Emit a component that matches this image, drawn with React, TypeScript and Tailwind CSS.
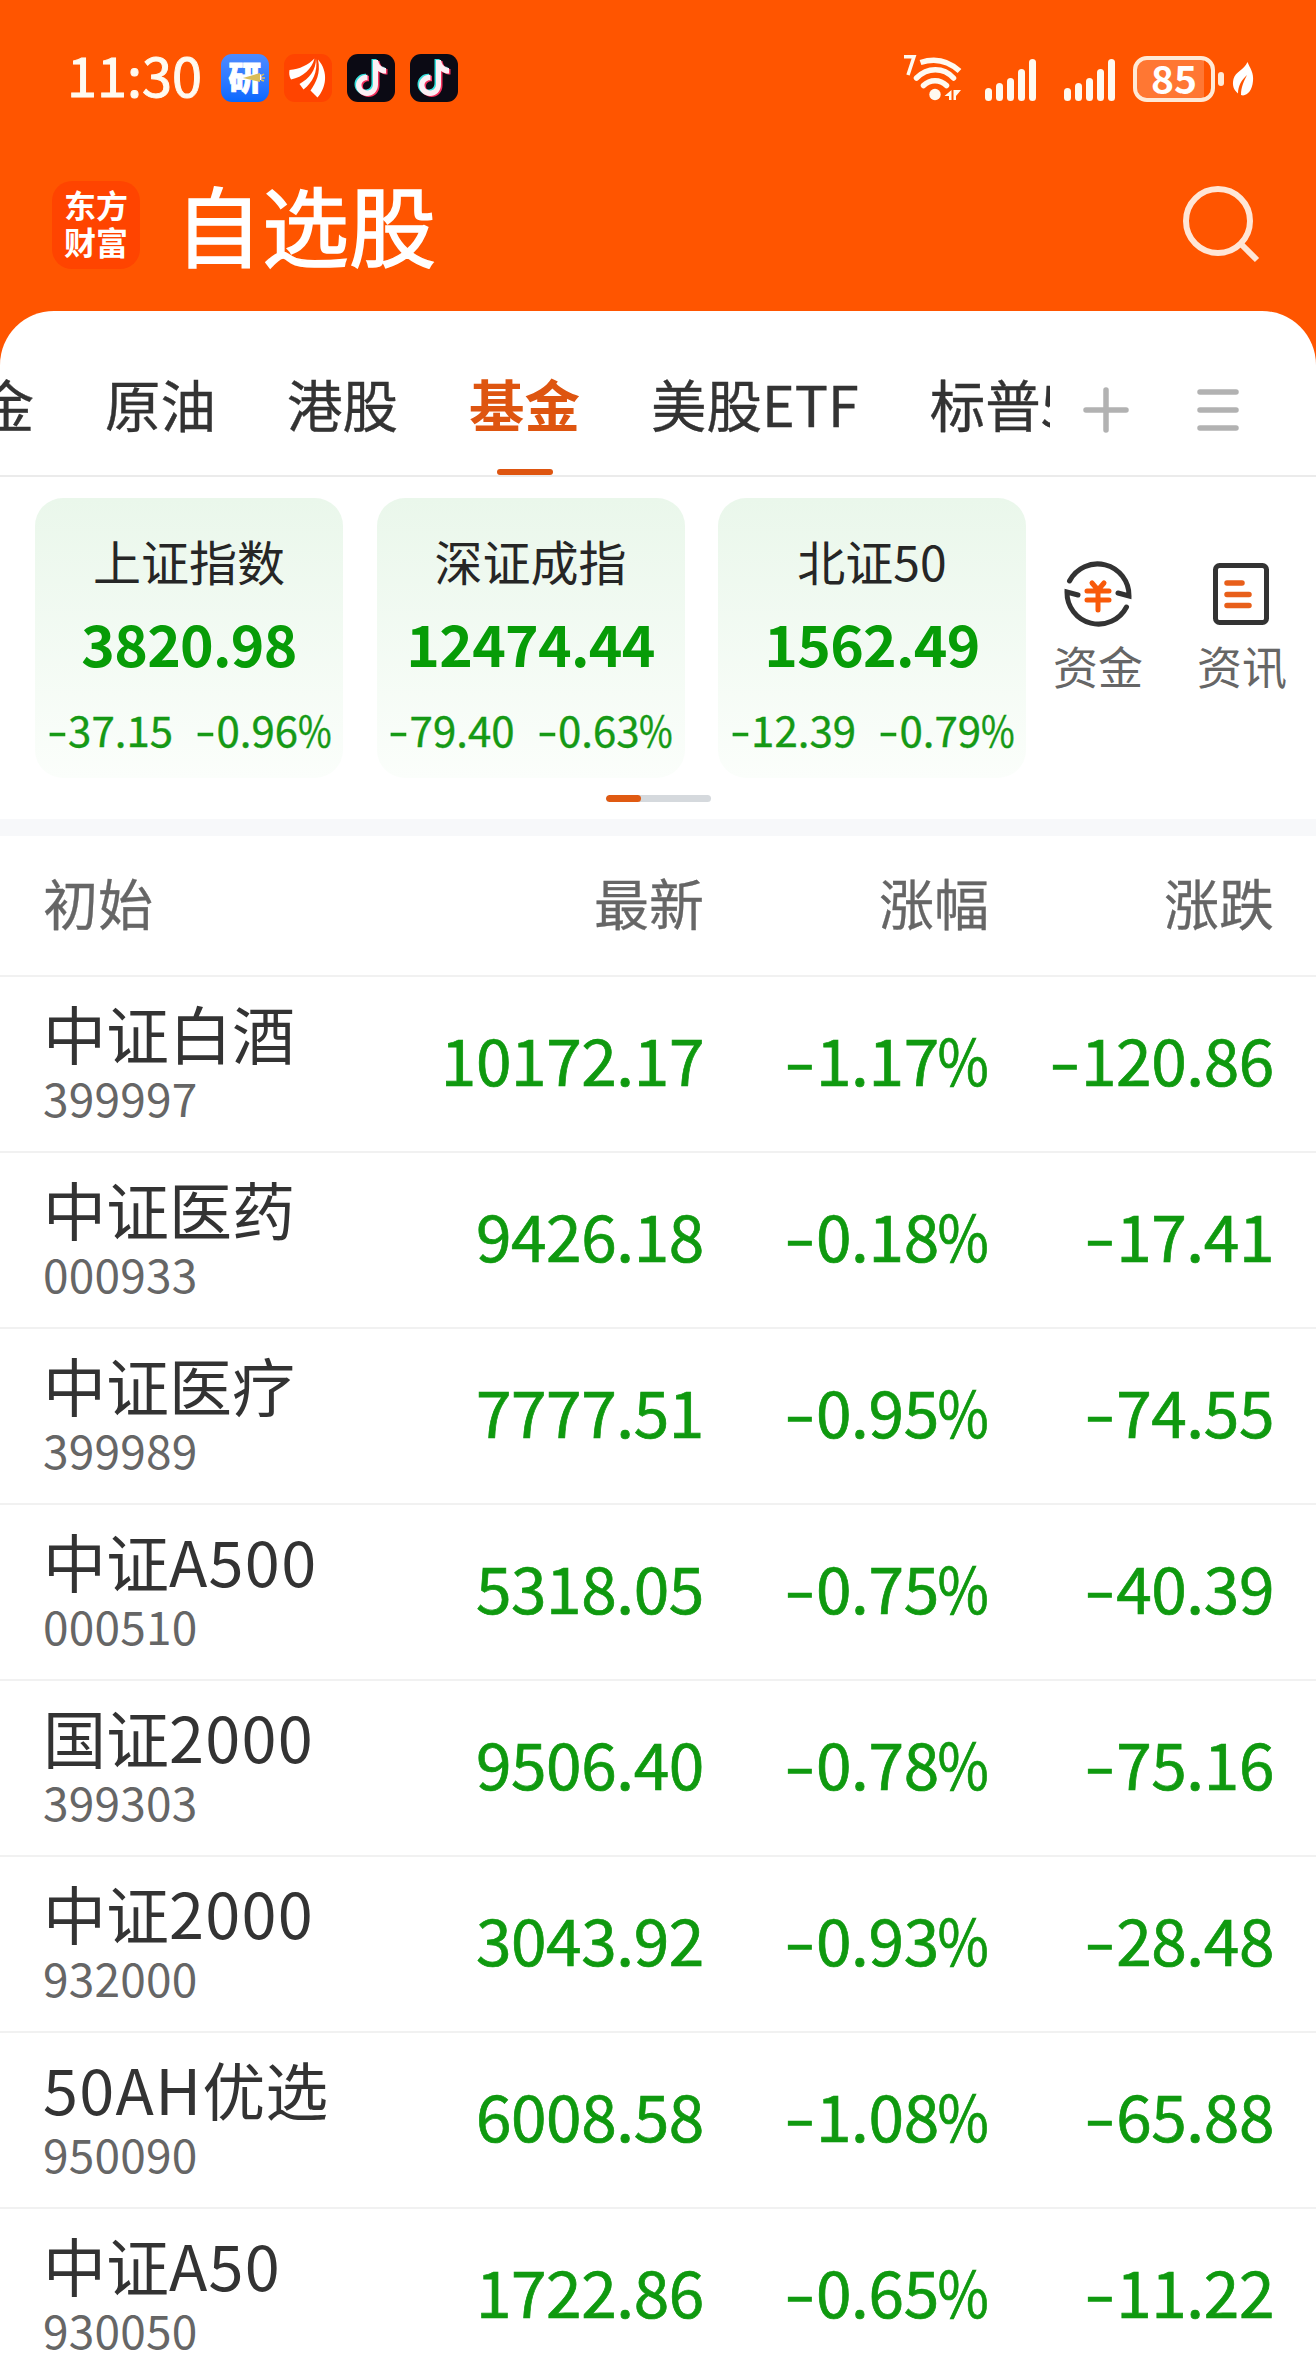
import { clsx } from 'clsx'

const TABS = ['黄金', '原油', '港股', '基金', '美股ETF', '标普500']
const ACTIVE_TAB = '基金'

const INDICES = [
  { name: '上证指数', value: '3820.98', change: '-37.15', percent: '-0.96%' },
  { name: '深证成指', value: '12474.44', change: '-79.40', percent: '-0.63%' },
  { name: '北证50', value: '1562.49', change: '-12.39', percent: '-0.79%' },
]

const FUNDS = [
  { name: '中证白酒', code: '399997', price: '10172.17', percent: '-1.17%', change: '-120.86' },
  { name: '中证医药', code: '000933', price: '9426.18', percent: '-0.18%', change: '-17.41' },
  { name: '中证医疗', code: '399989', price: '7777.51', percent: '-0.95%', change: '-74.55' },
  { name: '中证A500', code: '000510', price: '5318.05', percent: '-0.75%', change: '-40.39' },
  { name: '国证2000', code: '399303', price: '9506.40', percent: '-0.78%', change: '-75.16' },
  { name: '中证2000', code: '932000', price: '3043.92', percent: '-0.93%', change: '-28.48' },
  { name: '50AH优选', code: '950090', price: '6008.58', percent: '-1.08%', change: '-65.88' },
  { name: '中证A50', code: '930050', price: '1722.86', percent: '-0.65%', change: '-11.22' },
]

const NOTE = 'M25 6h5c.6 4.500 3.500 7.500 8 8v5.500c-3 0-5.700-1-8-2.600v13.600c0 7-5.200 11.500-11 11.500S8 37.300 8 31.300s5-11 11.500-10.600v5.600c-3.500-.5-6 2-6 5s2.500 5.200 5.500 5.200 6-2 6-6.500z'

// The hyphen is stretched so it reads as a minus sign, the percent sign is narrowed
function Signed({ text }: { text: string }) {
  const isPercent = text.endsWith('%')
  return (
    <span>
      <span className="relative -top-[0.02em] mr-[0.02em] inline-block origin-right scale-x-[1.4]">-</span>
      {isPercent ? text.slice(1, -1) : text.slice(1)}
      {isPercent && <span className="-ml-[0.13em] inline-block origin-right scale-x-[0.87]">%</span>}
    </span>
  )
}

function FundName({ name }: { name: string }) {
  return (
    <>
      {name.split(/([A-Z0-9]+)/).map((part, i) => (
        <span key={i} className={clsx(i % 2 === 1 && 'tracking-[1.3px]')}>{part}</span>
      ))}
    </>
  )
}

function ResearchIcon() {
  return (
    <div className="flex h-12 w-12 items-center justify-center rounded-[11px] bg-linear-to-b from-[#4d8bff] to-[#0468ff]">
      <div className="relative text-[33px] leading-[48px] font-black text-white [-webkit-text-stroke:1px_white]">
        <span className="relative -top-[2px]">研</span>
        <svg className="absolute top-[18px] left-[14px]" width="24" height="12" viewBox="0 0 24 12">
          <path d="M0 6 17 1v9z" fill="#d9bd58" />
          <path d="M18 4l3-2M19 6h3M18 8l3 1" stroke="#d9bd58" strokeWidth="1.500" />
        </svg>
      </div>
    </div>
  )
}

function EastmoneyIcon() {
  return (
    <svg width="48" height="48" viewBox="0 0 48 48">
      <rect width="48" height="48" rx="11" fill="#ff4400" />
      <path d="M5.500 16C16 15 24 11 30.500 4.500 28 15 19 23 7 25.500 5 22 5 19 5.500 16z" fill="#fff" />
      <path d="M32 4.500c0 12-7 20-16.500 25.500l4 5.500c9-7 14.500-17.500 12.500-31z" fill="#fff" />
      <path d="M34 5.500c3 14-2 23-7.500 31l7 7C42 34 45 18 34 5.500z" fill="#fff" />
    </svg>
  )
}

function DouyinIcon() {
  return (
    <svg width="48" height="48" viewBox="0 0 48 48">
      <rect width="48" height="48" rx="11" fill="#0b0a14" />
      <path d={NOTE} fill="#35e0dc" transform="translate(-.5 -1)" />
      <path d={NOTE} fill="#f5315f" transform="translate(2.500 1)" />
      <path d={NOTE} fill="#fbeff4" transform="translate(1 0)" />
    </svg>
  )
}

function WifiIcon() {
  return (
    <svg width="62" height="50" viewBox="0 0 62 50" fill="none" stroke="#fffaf0" strokeWidth="5.500">
      <path d="M3 2.700h10L7 21" strokeWidth="3.500" />
      <path d="M19.500 8.500C33 4 47 6.500 58.500 17" />
      <path d="M15.500 24c11-11 27-11 37 0" strokeLinecap="round" />
      <path d="M22.500 31.500c6.500-6.500 16.500-6.500 23 0" strokeLinecap="round" />
      <circle cx="34" cy="40.500" r="5.700" fill="#fffaf0" stroke="none" />
      <path d="M43.500 42l7-6v10H48v-4zM52.500 46V36H60l-5 6v4z" fill="#fffaf0" stroke="none" />
    </svg>
  )
}

function SignalBars() {
  return (
    <div className="flex h-[43px] items-end gap-1">
      <span className="h-[13px] w-[7px] rounded-full bg-[#fffaf0]" />
      <span className="h-[18px] w-[7px] rounded-full bg-[#fffaf0]" />
      <span className="h-[23px] w-[7px] rounded-full bg-[#fffaf0]" />
      <span className="h-[32px] w-[7px] rounded-full bg-[#fffaf0]" />
      <span className="h-[42px] w-[7px] rounded-full bg-[#fffaf0]" />
    </div>
  )
}

function Battery() {
  return (
    <div className="flex items-center gap-[3px]">
      <div className="relative flex h-[46px] w-[82px] items-center justify-center rounded-[14px] border-4 border-[#ffe9d6]">
        <span className="absolute inset-y-0 left-0 w-[67px] rounded-l-[10px] bg-white/20" />
        <span className="relative -top-[2px] text-[39px] leading-none font-bold text-white">85</span>
      </div>
      <span className="h-[14px] w-[6px] rounded-full bg-[#ffe9d6]" />
    </div>
  )
}

function LeafIcon() {
  return (
    <svg width="22" height="34" viewBox="0 0 22 34">
      <path d="M15.500 0C18 6 22 11 21 19c-.8 9-5 14-10 14.500L9 33c0-8 3-14 6-20C9.500 18 6 24 6 31.500 1.500 28 0 23 1.500 17 3.500 9.500 12 8 15.500 0z" fill="#fff" />
    </svg>
  )
}

function StatusBar() {
  return (
    <div className="flex h-[156px] items-center pl-[67px]">
      <span className="w-[154px] pb-[8px] text-[54px] leading-none text-[#fffaf0] [-webkit-text-stroke:1px_#fffaf0]">11:30</span>
      <div className="flex gap-[15px]">
        <ResearchIcon />
        <EastmoneyIcon />
        <DouyinIcon />
        <DouyinIcon />
      </div>
      <div className="ml-[443px] flex items-center pt-[2px]">
        <WifiIcon />
        <div className="ml-[22px] flex gap-[28px]">
          <SignalBars />
          <SignalBars />
        </div>
        <div className="ml-[18px] flex items-center gap-[8px]">
          <Battery />
          <LeafIcon />
        </div>
      </div>
    </div>
  )
}

function TitleBar() {
  return (
    <div className="flex h-[155px] items-center justify-between pr-[53px] pb-[18px] pl-[52px]">
      <div className="flex items-center gap-[35px]">
        <div className="flex h-[88px] w-[88px] flex-col items-center justify-center rounded-[20px] bg-[#ff4400] pb-[4px] text-[32px] leading-[37px] font-bold text-white">
          <span>东方</span>
          <span>财富</span>
        </div>
        <h1 className="pb-[3px] text-[87px] leading-none text-white [-webkit-text-stroke:1.500px_white]">自选股</h1>
      </div>
      <svg width="80" height="80" viewBox="0 0 80 80" fill="none" stroke="#ffe6d6" strokeWidth="6">
        <circle cx="35" cy="36" r="32" />
        <path d="M58 59l16 16" />
      </svg>
    </div>
  )
}

function TabBar() {
  return (
    <nav className="flex h-[166px] items-stretch border-b-2 border-[#ebebeb]">
      <div className="flex w-[1050px] justify-start overflow-hidden">
        <div className="-ml-[77px] flex shrink-0 gap-[71px]">
          {TABS.map((tab) => (
            <div
              key={tab}
              className={clsx(
                'flex flex-col items-center text-[55.5px] whitespace-nowrap',
                tab === ACTIVE_TAB ? 'font-bold text-[#de5510]' : 'text-[#333] [-webkit-text-stroke:0.4px_#333]',
              )}
            >
              <span className="mt-[52px] h-[106px] leading-[80px]">{tab}</span>
              {tab === ACTIVE_TAB && <span className="h-[6px] w-[56px] rounded-[3px] bg-[#de5510]" />}
            </div>
          ))}
        </div>
      </div>
      <svg className="mt-[75px] ml-[32px]" width="48" height="48" viewBox="0 0 48 48" stroke="#b2b2b2" strokeWidth="5.500" strokeLinecap="round">
        <path d="M24 4v40M4 24h40" />
      </svg>
      <svg className="mt-[75px] ml-[64px]" width="48" height="48" viewBox="0 0 48 48" stroke="#b2b2b2" strokeWidth="5.500" strokeLinecap="round">
        <path d="M6 6h36M6 24h36M6 42h36" />
      </svg>
    </nav>
  )
}

function MoneyIcon() {
  return (
    <svg width="72" height="72" viewBox="0 0 72 72" fill="none" strokeLinecap="round">
      <g stroke="#333" strokeWidth="5">
        <path d="M7.500 23A31.500 31.500 0 0 1 67 38l-11-3" />
        <path d="M64.500 49A31.500 31.500 0 0 1 5 34l11 3" />
      </g>
      <path d="M30 25l6 7 6-7M25 33h22M25 42h22M36 32v20" stroke="#f85a0a" strokeWidth="5" />
    </svg>
  )
}

function NewsIcon() {
  return (
    <svg width="72" height="72" viewBox="0 0 72 72" fill="none" strokeLinecap="round">
      <rect x="9.500" y="7.500" width="51" height="57" rx="4" stroke="#333" strokeWidth="5" />
      <path d="M21 25h15M21 36.500h22M21 47.500h22" stroke="#e85f1a" strokeWidth="5.500" />
    </svg>
  )
}

function IndexPanel() {
  return (
    <section className="h-[342px] pt-[21px] pl-[35px]">
      <div className="flex">
        <div className="flex gap-[33.5px]">
          {INDICES.map((item) => (
            <div
              key={item.name}
              className="flex h-[280px] w-[308px] flex-col items-center rounded-[28px] bg-linear-to-b from-[#eaf7eb] to-[#fbfefb] whitespace-nowrap"
            >
              <span className="mt-[32px] text-[48px] leading-[60px] text-[#262626]">{item.name}</span>
              <span className="mt-[20px] text-[57px] leading-[64px] font-bold tracking-[-0.7px] text-[#079c07]">{item.value}</span>
              <div className="mt-[29px] ml-[6px] flex gap-[28px] text-[42px] leading-[52px] text-[#159915] [-webkit-text-stroke:0.4px_#159915]">
                <Signed text={item.change} />
                <Signed text={item.percent} />
              </div>
            </div>
          ))}
        </div>
        <div className="mt-[60px] ml-[27px] flex gap-[54px] text-[45px] leading-[60px] text-[#666]">
          <div className="flex w-[90px] flex-col items-center">
            <MoneyIcon />
            <span className="mt-[6px]">资金</span>
          </div>
          <div className="flex w-[90px] flex-col items-center">
            <NewsIcon />
            <span className="mt-[6px]">资讯</span>
          </div>
        </div>
      </div>
      <div className="mt-[17px] ml-[571px] h-[7px] w-[105px] overflow-hidden rounded-full bg-[#d5d9dd]">
        <div className="h-full w-[35px] rounded-full bg-[#e05a12]" />
      </div>
    </section>
  )
}

function FundTable() {
  return (
    <section className="border-t-[17px] border-[#f7f8fa]">
      <div className="grid h-[141px] grid-cols-[362px_299px_285px_285px] items-center border-b-2 border-[#f1f1f1] pb-[9px] pl-[43px] text-right text-[55px] leading-none text-[#666] [-webkit-text-stroke:0.3px_#666]">
        <span className="text-left">初始</span>
        <span>最新</span>
        <span>涨幅</span>
        <span>涨跌</span>
      </div>
      {FUNDS.map((fund) => (
        <div
          key={fund.code}
          className="grid h-[176px] grid-cols-[362px_299px_285px_285px] items-center border-b-2 border-[#f1f1f1] pl-[43px] text-right text-[64px] leading-none tracking-[-0.4px] text-[#0f990f] [-webkit-text-stroke:0.7px_#0f990f]"
        >
          <div className="flex flex-col pb-[6px] text-left tracking-normal [-webkit-text-stroke:0px]">
            <span className="text-[63px] leading-[72px] text-[#333]"><FundName name={fund.name} /></span>
            <span className="text-[46px] leading-[58px] tracking-[0.2px] text-[#666]">{fund.code}</span>
          </div>
          <span className="pb-[12px]">{fund.price}</span>
          <span className="pb-[12px]"><Signed text={fund.percent} /></span>
          <span className="pb-[12px]"><Signed text={fund.change} /></span>
        </div>
      ))}
    </section>
  )
}

export default function App() {
  return (
    <div className="h-[2364px] w-[1316px] overflow-hidden bg-[#ff5500] font-['Noto_Sans_CJK_SC',sans-serif]">
      <StatusBar />
      <TitleBar />
      <main className="rounded-t-[54px] bg-white">
        <TabBar />
        <IndexPanel />
        <FundTable />
      </main>
    </div>
  )
}
